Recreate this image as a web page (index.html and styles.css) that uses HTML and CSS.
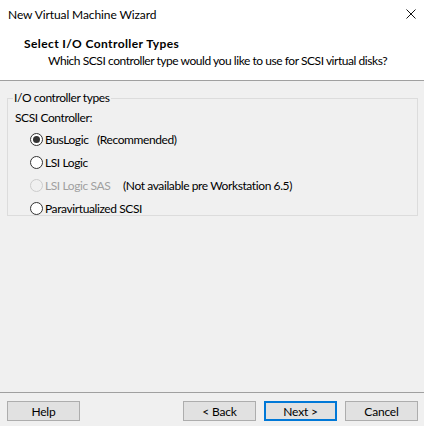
FILE: index.html
```html
<html>
  <head>
    <title>New Virtual Machine Wizard</title>
    <link rel="stylesheet" href="styles.css">
  </head>
  <body>
    <div class="titlebar">
      <span class="title">New Virtual Machine Wizard</span>
      <span class="close">
        <svg width="10" height="10" viewBox="0 0 10 10">
          <path d="M0.5 0.5 L9.5 9.5 M9.5 0.5 L0.5 9.5" stroke="#111" stroke-width="1" fill="none" />
        </svg>
      </span>
    </div>

    <div class="header">
      <div class="heading">Select I/O Controller Types</div>
      <div class="subheading">Which SCSI controller type would you like to use for SCSI virtual disks?</div>
    </div>

    <main>
      <fieldset class="group">
        <legend>I/O controller types</legend>
        <div class="caption">SCSI Controller:</div>
        <div class="options">
          <div class="option">
            <span class="radio checked"></span>
            <span class="name w1">BusLogic</span>
            <span class="note">(Recommended)</span>
          </div>
          <div class="option">
            <span class="radio"></span>
            <span class="name">LSI Logic</span>
          </div>
          <div class="option disabled">
            <span class="radio"></span>
            <span class="name w2">LSI Logic SAS</span>
            <span class="note">(Not available pre Workstation 6.5)</span>
          </div>
          <div class="option">
            <span class="radio"></span>
            <span class="name">Paravirtualized SCSI</span>
          </div>
        </div>
      </fieldset>
    </main>

    <div class="footer">
      <button class="btn">Help</button>
      <div class="spacer"></div>
      <button class="btn">&lt; Back</button>
      <button class="btn default">Next &gt;</button>
      <button class="btn">Cancel</button>
    </div>
  </body>
</html>
```

FILE: styles.css
```css
html,
body {
  width: 424px;
  height: 426px;
  margin: 0;
}

body {
  display: flex;
  flex-direction: column;
  background: #f0f0f0;
  font: 12px Lato, "Liberation Sans", sans-serif;
  letter-spacing: -0.4px;
  color: #000;
  overflow: hidden;
  white-space: nowrap;
}

.titlebar {
  height: 30px;
  background: #fff;
  display: flex;
  align-items: center;
  justify-content: space-between;
  padding: 0 8px 2px 8px;
  box-sizing: border-box;
  letter-spacing: -0.1px;
}
.close {
  display: flex;
}

.header {
  height: 51px;
  background: #fff;
  border-bottom: 1px solid #a0a0a0;
  box-sizing: border-box;
  padding: 5px 0 0 24px;
}
.heading {
  font-weight: bold;
  line-height: 17px;
  letter-spacing: 0.4px;
}
.subheading {
  padding-left: 24px;
  line-height: 17px;
  letter-spacing: -0.45px;
}

main {
  flex-grow: 1;
  padding: 9px 6px 0 7px;
}

.group {
  margin: 0;
  padding: 0 0 8px 7px;
  border: 1px solid #dcdcdc;
  height: 126px;
  box-sizing: border-box;
}
.group legend {
  padding: 0 1px;
  margin-left: -2px;
  line-height: 16px;
}
.caption {
  line-height: 16px;
  margin-top: 4px;
}
.options {
  padding-left: 15px;
  margin-top: 2px;
}
.option {
  display: flex;
  align-items: center;
  height: 23px;
}
.radio {
  flex-shrink: 0;
  width: 13px;
  height: 13px;
  box-sizing: border-box;
  border: 1px solid #333;
  border-radius: 50%;
  background: #fff;
  margin-right: 2px;
  display: flex;
  align-items: center;
  justify-content: center;
}
.radio.checked::after {
  content: "";
  width: 7px;
  height: 7px;
  border-radius: 50%;
  background: #333;
}
.name {
  flex-shrink: 0;
}
.name.w1 {
  width: 52px;
}
.name.w2 {
  width: 78px;
}
.disabled {
  color: #a0a0a0;
}
.disabled .radio {
  border-color: #cccccc;
  background: #f0f0f0;
}
.disabled .note {
  color: #000;
}

.footer {
  height: 34px;
  border-top: 1px solid #a0a0a0;
  box-sizing: border-box;
  display: flex;
  align-items: flex-start;
  padding: 8px 6px 0 7px;
}
.spacer {
  flex-grow: 1;
}
.btn {
  width: 73px;
  height: 20px;
  margin: 0 0 0 8px;
  padding: 0;
  background: #e1e1e1;
  border: 1px solid #adadad;
  font: 12px Lato, "Liberation Sans", sans-serif;
  letter-spacing: -0.2px;
  color: #000;
}
.btn:first-child {
  margin-left: 0;
}
.btn.default {
  border: 2px solid #0078d7;
}
```
